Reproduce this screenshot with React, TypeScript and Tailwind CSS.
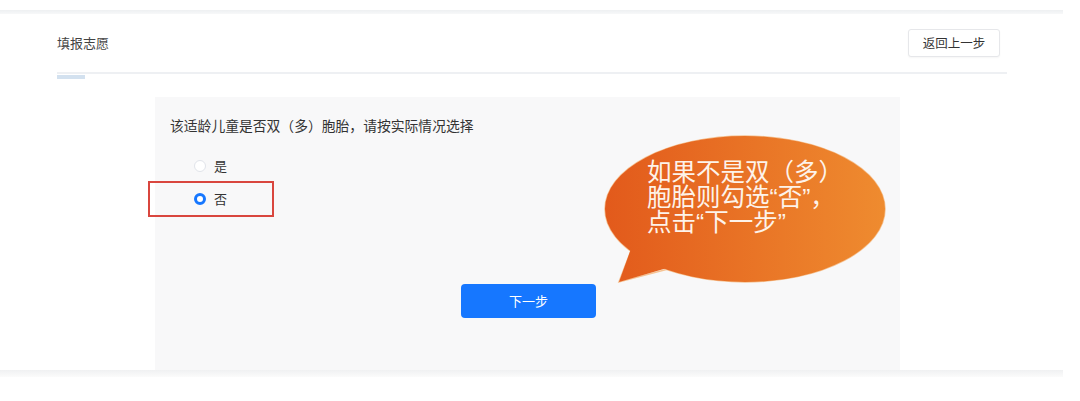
import React from "react";


export default class App extends React.Component {

    state = {
        twins: "no",
    }

    /**
     *
     * Switches the selected option of the question
     *
     * @return {void} Returns nothing
     *
     */
    select(value: string): void {
        this.setState({twins: value});
    }

    /**
     *
     * Renders one radio option
     *
     * @return {JSX.Element} The radio row
     *
     */
    renderRadio(value: string, label: string): JSX.Element {
        const checked = this.state.twins === value;

        return (
            <label className="flex items-center h-[20px] pl-[39px] cursor-pointer" onClick={() => this.select(value)}>
                {checked ?
                    <span className="w-[12px] h-[12px] rounded-full border-[3.5px] border-[#1677ff] bg-white"/> :
                    <span className="w-[12px] h-[12px] rounded-full border border-[#e1e4ea] bg-white"/>
                }
                <span className="ml-[8px] text-[13px] text-[#333]">{label}</span>
            </label>
        )
    }

    /**
     *
     * Renders the page
     *
     * @return {JSX.Element} The element that needs to be rendered
     *
     */
    render(): JSX.Element {
        return (
            <div className="relative w-[1080px] h-[401px] bg-white overflow-hidden"
                 style={{fontFamily: '"Noto Sans CJK SC", "Noto Sans", sans-serif'}}>

                <div className="pt-[10px]">
                    <div className="h-[4px] w-[1063px] bg-gradient-to-b from-[#eef0f2] to-[#f7f8f9]"/>
                </div>

                <div className="ml-[57px] w-[950px]">
                    <div className="flex items-center justify-between h-[58px]">
                        <h1 className="text-[13px] text-[#444]">填报志愿</h1>
                        <button
                            className="mr-[7px] h-[28px] w-[92px] rounded-[3px] border border-[#e6e7ea] bg-white text-[12.5px] text-[#333] shadow-[0_1px_2px_rgba(0,0,0,0.04)]">
                            返回上一步
                        </button>
                    </div>
                    <div className="h-[2px] bg-[#eef0f3]"/>
                    <div className="mt-[1px] h-[4px] w-[28px] bg-[#d3e1ef]"/>
                </div>

                <div className="mt-[18px] ml-[155px] w-[745px] h-[273px] bg-[#f8f8f9] flex flex-col pt-[18px]">
                    <p className="pl-[15px] text-[13.8px] leading-[20px] text-[#333]">
                        该适龄儿童是否双（多）胞胎，请按实际情况选择
                    </p>
                    <div className="mt-[21px]">{this.renderRadio("yes", "是")}</div>
                    <div className="mt-[13px]">{this.renderRadio("no", "否")}</div>
                    <div className="mt-[75px] flex justify-center">
                        <button className="ml-[2px] w-[135px] h-[34px] rounded-[4px] bg-[#1677ff] text-white text-[13px]">
                            下一步
                        </button>
                    </div>
                </div>

                <div className="h-[7px] w-[1063px] bg-gradient-to-b from-[#f0f1f2] to-[#fbfbfb]"/>

                {/* annotation: red frame round the selected option */}
                <div className="absolute left-[148px] top-[181px] w-[126px] h-[36px] border-2 border-[#d9463e]"/>

                {/* annotation: speech bubble */}
                <div className="absolute left-[600px] top-[130px] w-[295px] h-[160px]">
                    <svg width="295" height="160" viewBox="0 0 295 160" className="absolute inset-0">
                        <defs>
                            <linearGradient id="bubble" x1="0" y1="0" x2="295" y2="0" gradientUnits="userSpaceOnUse">
                                <stop offset="0" stopColor="#e2591b"/>
                                <stop offset="1" stopColor="#ef8d30"/>
                            </linearGradient>
                        </defs>
                        <ellipse cx="145" cy="79" rx="140" ry="73" fill="none" stroke="#f5c394" strokeWidth="1.5"/>
                        <path d="M32 118 L19 152 L72 138 Z" fill="none" stroke="#f5c394" strokeWidth="1.5"/>
                        <ellipse cx="145" cy="79" rx="140" ry="73" fill="url(#bubble)"/>
                        <path d="M32 116 L19 152 L74 136 Z" fill="url(#bubble)"/>
                    </svg>
                    <div className="absolute left-[47px] top-[30px] text-[#fdf3ea] text-[24.5px] leading-[25px]"
                         style={{fontFamily: '"Liberation Sans", "Noto Sans CJK SC", sans-serif'}}>
                        <div>如果不是双（多）</div>
                        <div>胞胎则勾选“否”，</div>
                        <div>点击“下一步”</div>
                    </div>
                </div>
            </div>
        )
    };
};
